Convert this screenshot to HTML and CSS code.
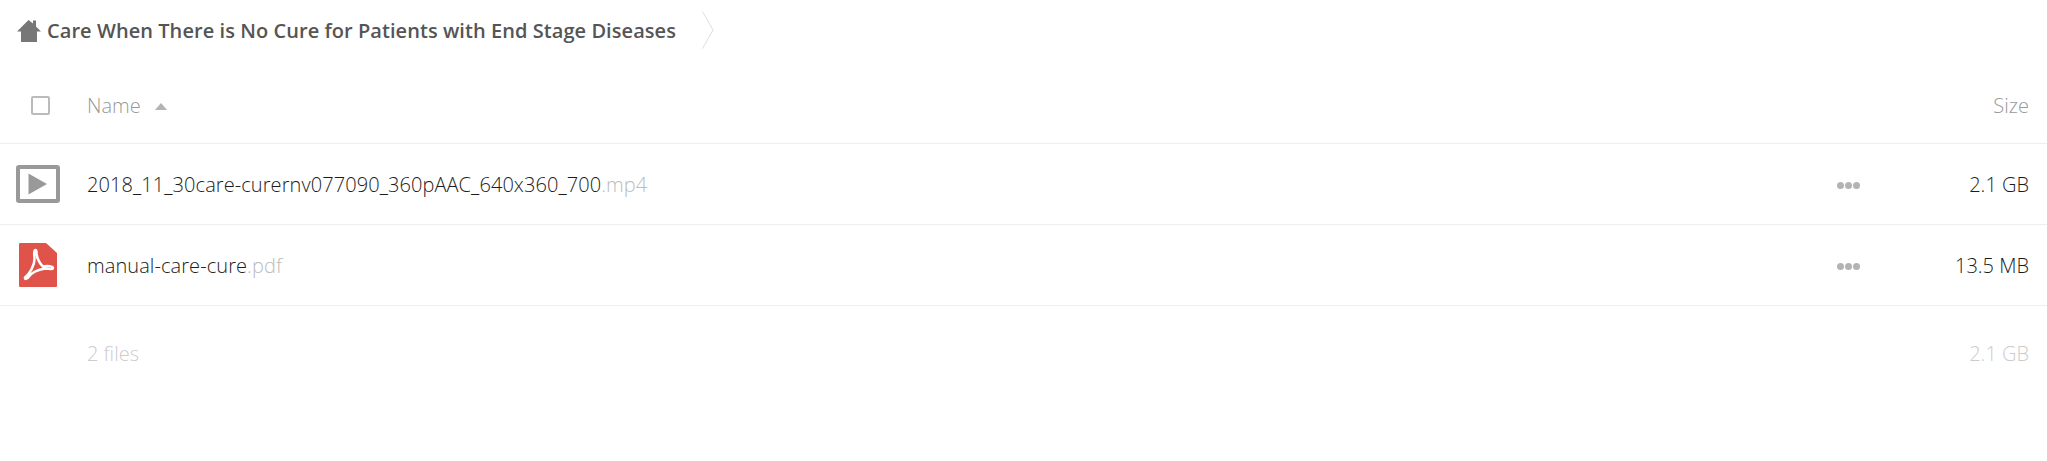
FILE: index.html
```html
<!DOCTYPE html>
<html lang="en">
<head>
    <meta charset="UTF-8">
    <title>Care When There is No Cure for Patients with End Stage Diseases</title>
    <link rel="stylesheet" href="styles.css">
</head>
<body>

    <!-- Breadcrumb -->
    <div class="crumb">
        <svg class="home" viewBox="0 0 24 22" width="24" height="22">
            <path d="M11.500 0L16 3.500V0.500H19V6.500L24 11.500H20V22H4V11.500H0Z" fill="#777"/>
        </svg>
        <span class="crumb-title">Care When There is No Cure for Patients with End Stage Diseases</span>
        <svg class="chevron" viewBox="0 0 12 38" width="12" height="38">
            <path d="M0.500 0.500L11 19L0.500 37.500" fill="none" stroke="#ddd"/>
        </svg>
    </div>

    <!-- File list -->
    <div class="row head">
        <div class="col-check"><span class="checkbox"></span></div>
        <div class="col-name">Name <span class="sort"></span></div>
        <div class="col-size">Size</div>
    </div>

    <div class="row file">
        <div class="col-check">
            <svg viewBox="0 0 44 38" width="44" height="38">
                <rect x="2" y="2" width="40" height="34" rx="1" fill="#fff" stroke="#999" stroke-width="4"/>
                <path d="M12.500 8.500L31 19L12.500 29.500Z" fill="#999"/>
            </svg>
        </div>
        <div class="col-name">2018_11_30care-curernv077090_360pAAC_640x360_700<span class="ext">.mp4</span></div>
        <div class="col-more"><i></i><i></i><i></i></div>
        <div class="col-size">2.1 GB</div>
    </div>

    <div class="row file pdf">
        <div class="col-check">
            <svg viewBox="0 0 38 44" width="38" height="44">
                <path d="M1 0H27L38 10V43A1 1 0 0 1 37 44H1A1 1 0 0 1 0 43V1A1 1 0 0 1 1 0Z" fill="#e0534a"/>
                <path d="M16.500 7C15 7 15 11 15.500 15C16 22 10.500 31 6 34.500C5.500 36.500 8 36.500 10 33.500C14 28 20 26.500 26 25.500C30 25.500 34 27 34 25C34 23 28 22.500 24 23.500C21 21 17.500 15 17.500 9.500C17.500 7.500 17 7 16.500 7Z" fill="none" stroke="#fff" stroke-width="2.500" stroke-linejoin="round"/>
            </svg>
        </div>
        <div class="col-name">manual-care-cure<span class="ext">.pdf</span></div>
        <div class="col-more"><i></i><i></i><i></i></div>
        <div class="col-size">13.5 MB</div>
    </div>

    <div class="row summary">
        <div class="col-check"></div>
        <div class="col-name">2 files</div>
        <div class="col-size">2.1 GB</div>
    </div>

</body>
</html>
```

FILE: styles.css
```css
body {
    margin: 0;
    background: #fff;
    font-family: "Open Sans", sans-serif;
    font-weight: 300;
    font-size: 20px;
    color: #1c1c1c;
}

.crumb {
    display: flex;
    align-items: center;
    height: 60px;
    padding-left: 17px;
}

.home {
    margin-top: 2px;
}

.crumb-title {
    margin-left: 6px;
    font-weight: 600;
    letter-spacing: 0.06px;
    color: #555;
}

.chevron {
    margin-left: 26px;
}

.row {
    display: flex;
    align-items: center;
    box-sizing: border-box;
    height: 81px;
    border-bottom: 1px solid #eee;
    padding-right: 18px;
}

.head {
    height: 84px;
    padding-top: 8px;
    color: #999;
}

.file .col-name {
    letter-spacing: 0.08px;
}

.summary {
    border-bottom: none;
    padding-top: 14px;
    color: #ccc;
}

.col-check {
    width: 87px;
    flex: none;
    display: flex;
    align-items: center;
    padding-left: 16px;
    box-sizing: border-box;
}

.head .col-check {
    padding-left: 31px;
}

.pdf .col-check {
    padding-left: 19px;
}

.col-name {
    flex: 1;
}

.col-more {
    display: flex;
    gap: 1px;
    width: 62px;
    margin-top: 3px;
}

.col-more i {
    width: 7px;
    height: 7px;
    border-radius: 50%;
    background: #b3b3b3;
}

.col-size {
    width: 130px;
    text-align: right;
}

.checkbox {
    display: block;
    width: 15px;
    height: 15px;
    border: 2px solid #bbb;
    border-radius: 2px;
}

.sort {
    display: inline-block;
    margin-left: 9px;
    vertical-align: 3px;
    border-left: 6.500px solid transparent;
    border-right: 6.500px solid transparent;
    border-bottom: 7px solid #b3b3b3;
}

.ext {
    color: #bbb;
}
```
